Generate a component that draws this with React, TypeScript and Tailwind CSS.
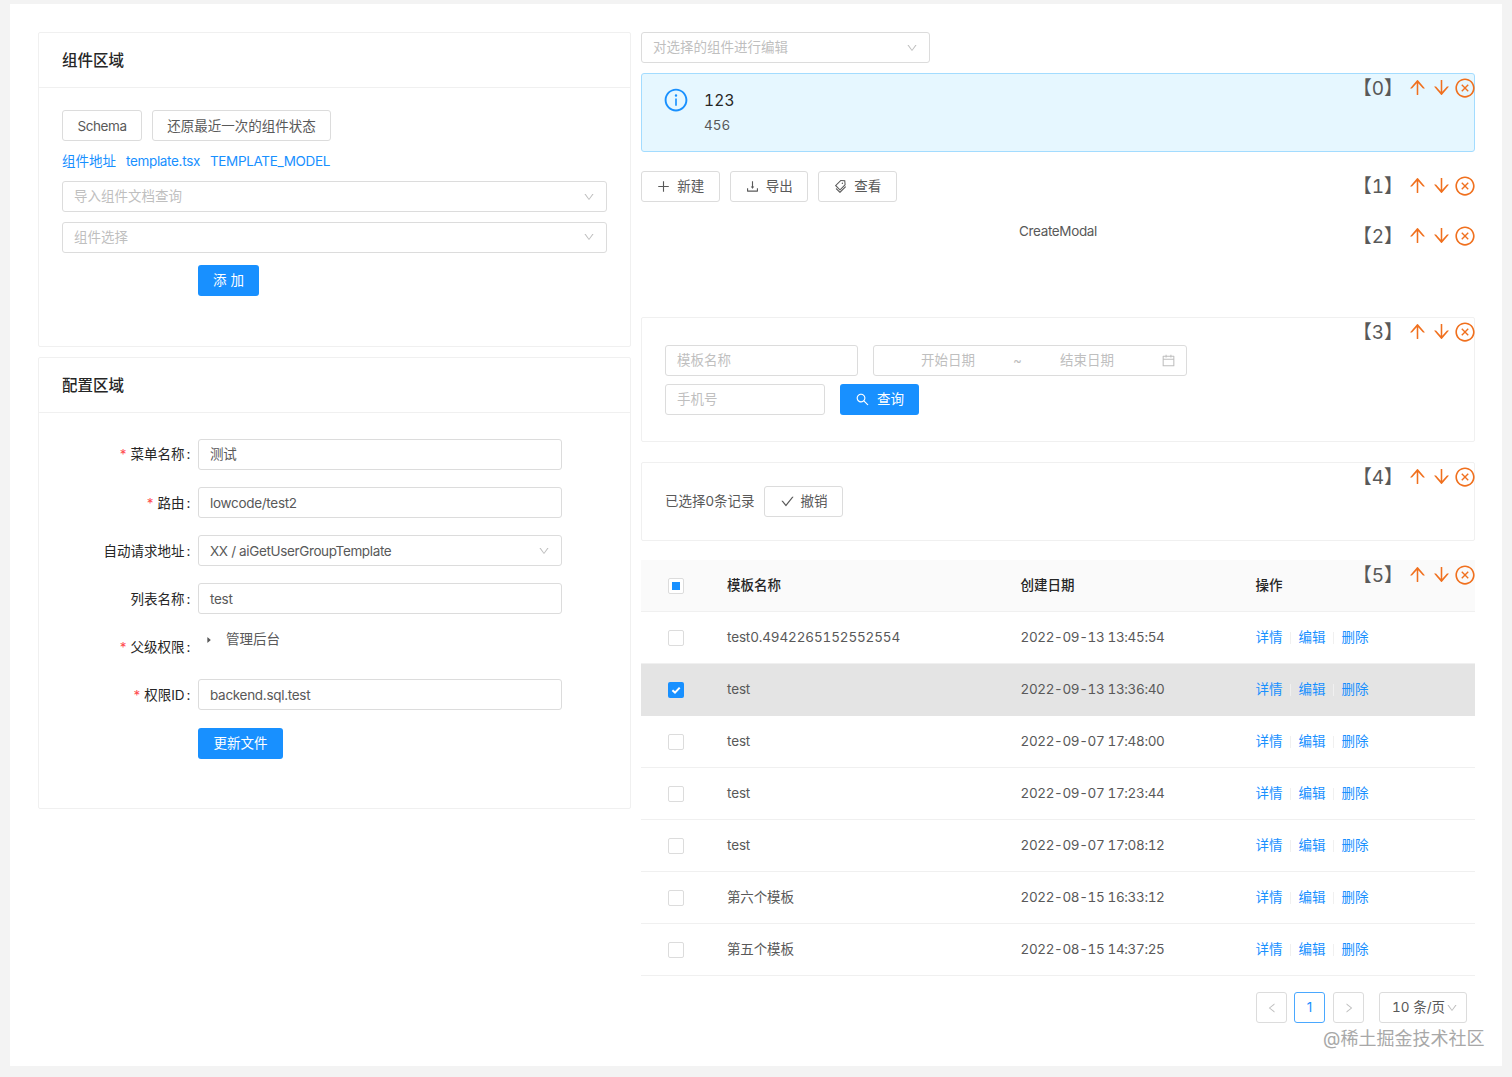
import React from "react";
import {
  AiOutlineArrowUp, AiOutlineArrowDown, AiOutlineCloseCircle, AiOutlineInfoCircle, AiOutlinePlus,
  AiOutlineDownload, AiOutlineTags, AiOutlineSearch, AiOutlineCheck, AiOutlineCalendar, AiOutlineDown,
  AiOutlineLeft, AiOutlineRight, AiFillCaretRight,
} from "react-icons/ai";

const Btn = ({ icon, children, cls = "" }: { icon?: React.ReactNode; children: React.ReactNode; cls?: string }) => (
  <button className={`h-[31px] border border-[#dcdcdc] rounded-[3px] bg-white text-[#595959] text-[13.5px] flex items-center justify-center gap-[6px] ${cls}`}>
    {icon}
    {children}
  </button>
);

const Select = ({ text, cls = "", value = false }: { text: string; cls?: string; value?: boolean }) => (
  <div className={`h-[31px] border border-[#dcdcdc] rounded-[3px] bg-white flex items-center justify-between pl-[11px] pr-[11px] text-[13.5px] ${value ? "text-[#595959] tracking-[-0.36px]" : "text-[#bfbfbf]"} ${cls}`}>
    <span className={value ? "pt-[1px]" : ""}>{text}</span>
    <AiOutlineDown className="text-[#bfbfbf]" size={12} />
  </div>
);

const Input = ({ text, cls = "", value = false }: { text: string; cls?: string; value?: boolean }) => (
  <div className={`h-[31px] border border-[#dcdcdc] rounded-[3px] bg-white flex items-center px-[11px] text-[13.5px] ${value ? "text-[#595959] tracking-[-0.3px]" : "text-[#bfbfbf]"} ${cls}`}>
    {text}
  </div>
);

const Card = ({ title, cls, children }: { title: string; cls: string; children: React.ReactNode }) => (
  <div className={`border border-[#f0f0f0] rounded-[2px] bg-white ${cls}`}>
    <div className="h-[55px] border-b border-[#f0f0f0] flex items-center pl-[23px] pt-[2px] text-[15.5px] font-medium text-[#262626]">{title}</div>
    {children}
  </div>
);

const IconBox = ({ children }: { children: React.ReactNode }) => (
  <span className="w-[24px] h-[24px] mt-[-1px] flex items-center justify-center">{children}</span>
);

const Controls = ({ n }: { n: number }) => (
  <div className="absolute right-[-2px] top-[3px] h-[24px] flex items-center text-[#f0701e]">
    <span className="text-[#595959] text-[19px] mr-[2px] leading-none">【<span className="tabular-nums">{n}</span>】</span>
    <IconBox><AiOutlineArrowUp size={21} /></IconBox>
    <IconBox><AiOutlineArrowDown size={21} /></IconBox>
    <IconBox><AiOutlineCloseCircle size={22} /></IconBox>
  </div>
);

const Field = ({ label, req, children, cls = "", top = "pt-[1px]" }: { label: string; req?: boolean; children: React.ReactNode; cls?: string; top?: string }) => (
  <div className={`flex ${cls}`}>
    <div className={`w-[159px] h-[31px] flex items-center justify-end text-[13.5px] text-[#262626] pr-[7.5px] ${top}`}>
      {req && <span className="text-[#ff4d4f] mr-[4px] text-[13.5px]">*</span>}
      <span>{label}</span>
      <span className="ml-[2px]">:</span>
    </div>
    {children}
  </div>
);

const rows = [
  ["test0.4942265152552554", "2022-09-13 13:45:54"],
  ["test", "2022-09-13 13:36:40"],
  ["test", "2022-09-07 17:48:00"],
  ["test", "2022-09-07 17:23:44"],
  ["test", "2022-09-07 17:08:12"],
  ["第六个模板", "2022-08-15 16:33:12"],
  ["第五个模板", "2022-08-15 14:37:25"],
];

const gridCols = "grid grid-cols-[70px_293.5px_235px_235.5px] items-center";

const CheckMark = () => (
  <svg width="12" height="12" viewBox="0 0 12 12" fill="none">
    <path d="M2.4 6.2 L5 8.6 L9.7 3.6" stroke="white" strokeWidth="2" />
  </svg>
);

export default function App() {
  return (
    <div
      className="relative h-[1077px] bg-[#f3f3f3] pt-[4px] pl-[10px] pr-[10px] overflow-hidden text-[#595959]"
      style={{ fontFamily: '"Inter", "Noto Sans CJK SC", sans-serif' }}
    >
      <div className="bg-white h-[1062px] pt-[28px] pl-[28px] flex gap-[10px] items-start">
        {/* left column */}
        <div className="w-[593px] flex flex-col gap-[10px]">
          <Card title="组件区域" cls="h-[315px]">
            <div className="pt-[22px] px-[23px]">
              <div className="flex gap-[10px]">
                <Btn cls="w-[80px] pt-[1px]"><span className="tracking-[-0.4px]">Schema</span></Btn>
                <Btn cls="w-[179px] pt-[1px]">还原最近一次的组件状态</Btn>
              </div>
              <div className="flex gap-[10px] mt-[10px] h-[21px] items-center text-[13.5px] text-[#1890ff]">
                <span>组件地址</span>
                <span className="tracking-[-0.33px]">template.tsx</span>
                <span className="tracking-[-0.35px]">TEMPLATE_MODEL</span>
              </div>
              <Select text="导入组件文档查询" cls="mt-[9px] w-[545px]" />
              <Select text="组件选择" cls="mt-[9.5px] w-[545px]" />
              <div className="mt-[12.5px] ml-[136px] w-[61px] h-[31px] rounded-[3px] bg-[#1890ff] text-white text-[13.5px] flex items-center justify-center">添 加</div>
            </div>
          </Card>
          <Card title="配置区域" cls="h-[452px]">
            <div className="pt-[26px] flex flex-col">
              <Field label="菜单名称" req top="pt-0"><Input text="测试" value cls="w-[363.5px]" /></Field>
              <Field label="路由" req cls="mt-[17px]"><Input text="lowcode/test2" value cls="w-[363.5px] pt-[1px]" /></Field>
              <Field label="自动请求地址" cls="mt-[17px]"><Select text="XX / aiGetUserGroupTemplate" value cls="w-[363.5px]" /></Field>
              <Field label="列表名称" cls="mt-[17px]"><Input text="test" value cls="w-[363.5px] pt-[1px]" /></Field>
              <Field label="父级权限" req cls="mt-[17px] h-[48px] items-start">
                <div className="flex items-center h-[21px] mt-[-2px] text-[13.5px] text-[#595959]">
                  <AiFillCaretRight size={8} className="ml-[7px] mr-[13px] text-[#595959]" />
                  <span>管理后台</span>
                </div>
              </Field>
              <Field label="权限ID" req><Input text="backend.sql.test" value cls="w-[363.5px] pt-[1px]" /></Field>
              <div className="mt-[18px] ml-[159px] w-[85px] h-[31px] rounded-[3px] bg-[#1890ff] text-white text-[13.5px] flex items-center justify-center">更新文件</div>
            </div>
          </Card>
        </div>

        {/* right column */}
        <div className="w-[834px] flex flex-col">
          <Select text="对选择的组件进行编辑" cls="w-[289px]" />

          <div className="relative mt-[10px] h-[98px]">
            <div className="h-[79px] border border-[#a3dcff] rounded-[3px] bg-[#e6f7ff] flex pl-[21px] pt-[13px]">
              <AiOutlineInfoCircle size={26} className="text-[#1890ff]" />
              <div className="ml-[15px]">
                <div className="text-[15.5px] leading-[26px] mt-[1px] text-[#262626] tabular-nums tracking-[0.2px]">123</div>
                <div className="text-[13.5px] leading-[21px] mt-[1px] text-[#595959] tabular-nums">456</div>
              </div>
            </div>
            <Controls n={0} />
          </div>

          <div className="relative h-[50px]">
            <div className="flex gap-[10px]">
              <Btn cls="w-[78.5px]" icon={<AiOutlinePlus size={15} />}>新建</Btn>
              <Btn cls="w-[78.5px]" icon={<AiOutlineDownload size={15} />}>导出</Btn>
              <Btn cls="w-[78.5px]" icon={<AiOutlineTags size={15} />}>查看</Btn>
            </div>
            <Controls n={1} />
          </div>

          <div className="relative h-[96px]">
            <div className="text-center text-[13.5px] leading-[21px] text-[#595959] tracking-[-0.36px]">CreateModal</div>
            <Controls n={2} />
          </div>

          <div className="relative h-[145px]">
            <div className="h-[125px] border border-[#f0f0f0] rounded-[2px] pl-[23px] pt-[27px]">
              <div className="flex gap-[15px]">
                <Input text="模板名称" cls="w-[193px]" />
                <div className="w-[314px] h-[31px] border border-[#dcdcdc] rounded-[3px] flex items-center text-[13.5px] text-[#bfbfbf]">
                  <span className="ml-[47px] w-[54px]">开始日期</span>
                  <span className="ml-[38px]">~</span>
                  <span className="ml-[38px] w-[54px]">结束日期</span>
                  <AiOutlineCalendar size={15} className="ml-[47px]" />
                </div>
              </div>
              <div className="flex gap-[15px] mt-[8px]">
                <Input text="手机号" cls="w-[160px]" />
                <div className="w-[79px] h-[31px] rounded-[3px] bg-[#1890ff] text-white text-[13.5px] flex items-center justify-center gap-[7px]">
                  <AiOutlineSearch size={15} />
                  查询
                </div>
              </div>
            </div>
            <Controls n={3} />
          </div>

          <div className="relative h-[98px]">
            <div className="h-[79px] border border-[#f0f0f0] rounded-[2px] pl-[23px] pt-[23px] flex items-start gap-[9.5px]">
              <span className="h-[31px] flex items-center text-[13.5px] text-[#595959]">已选择0条记录</span>
              <Btn cls="w-[79px]" icon={<AiOutlineCheck size={15} />}>撤销</Btn>
            </div>
            <Controls n={4} />
          </div>

          <div className="relative">
            <div className={`${gridCols} h-[52px] bg-[#fafafa] border-b border-[#f0f0f0] text-[13.5px] font-medium text-[#262626]`}>
              <div className="flex justify-center">
                <span className="w-[16px] h-[16px] border border-[#dcdcdc] rounded-[2px] bg-white flex items-center justify-center">
                  <span className="w-[8px] h-[8px] bg-[#1890ff]" />
                </span>
              </div>
              <div className="pl-[16px]">模板名称</div>
              <div className="pl-[16px]">创建日期</div>
              <div className="pl-[16px]">操作</div>
            </div>
            {rows.map(([name, date], i) => (
              <div key={i} className={`${gridCols} h-[52px] border-b text-[13.5px] text-[#595959] ${i === 1 ? "bg-[#e4e4e4] border-[#e4e4e4]" : "border-[#f0f0f0]"}`}>
                <div className="flex justify-center">
                  {i === 1 ? (
                    <span className="w-[16px] h-[16px] rounded-[2px] bg-[#1890ff] flex items-center justify-center">
                      <CheckMark />
                    </span>
                  ) : (
                    <span className="w-[16px] h-[16px] border border-[#dcdcdc] rounded-[2px] bg-white" />
                  )}
                </div>
                <div className="pl-[16px] tabular-nums tracking-[-0.14px]">{name}</div>
                <div className="pl-[16px] tabular-nums tracking-[-0.37px]">{date}</div>
                <div className="pl-[16px] flex items-center text-[#1890ff]">
                  <span>详情</span>
                  <span className="w-px h-[12px] bg-[#f0f0f0] mx-[7.5px]" />
                  <span>编辑</span>
                  <span className="w-px h-[12px] bg-[#f0f0f0] mx-[7.5px]" />
                  <span>删除</span>
                </div>
              </div>
            ))}
            <Controls n={5} />
          </div>

          <div className="flex items-center mt-[16px] pl-[615px]">
            <span className="w-[31px] h-[31px] border border-[#dcdcdc] rounded-[3px] flex items-center justify-center text-[#bfbfbf]"><AiOutlineLeft size={12} /></span>
            <span className="ml-[7px] w-[31px] h-[31px] border border-[#4aa8ff] rounded-[3px] flex items-center justify-center text-[13.5px] text-[#1890ff]">1</span>
            <span className="ml-[8px] w-[31px] h-[31px] border border-[#dcdcdc] rounded-[3px] flex items-center justify-center text-[#bfbfbf]"><AiOutlineRight size={12} /></span>
            <span className="ml-[15px] w-[88px] h-[31px] border border-[#dcdcdc] rounded-[3px] flex items-center pl-[12px] text-[13.5px] text-[#595959] tabular-nums">
              10 条/页
              <AiOutlineDown size={12} className="text-[#bfbfbf] ml-[1px]" />
            </span>
          </div>
        </div>
      </div>

      <div className="absolute left-[1323px] top-[1026px] text-[18px] leading-[26px] text-[#a8a8a8] whitespace-nowrap">@稀土掘金技术社区</div>
    </div>
  );
}
